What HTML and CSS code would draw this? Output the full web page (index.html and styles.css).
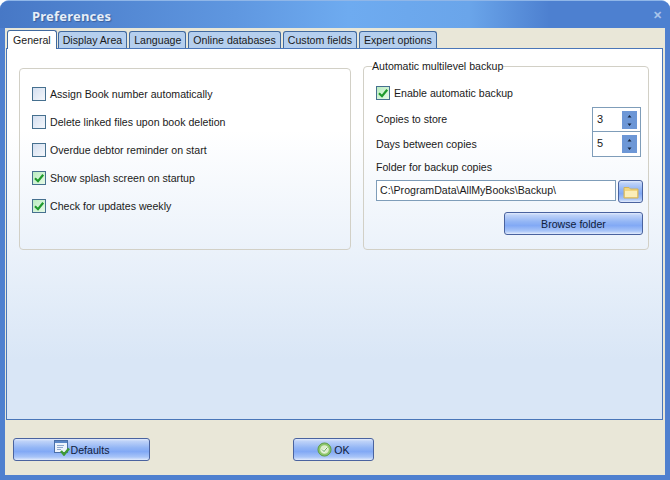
FILE: index.html
```html
<!DOCTYPE html>
<html lang="en">

<head>
    <meta charset="UTF-8">
    <title>Preferences</title>
    <link rel="stylesheet" href="styles.css">
</head>

<body>
    <div class="window">
        <div class="titlebar">
            <span class="title">Preferences</span>
            <span class="close">&#10005;</span>
        </div>

        <div class="client">
            <ul class="tabs">
                <li class="tab tab-active">General</li>
                <li class="tab">Display Area</li>
                <li class="tab">Language</li>
                <li class="tab">Online databases</li>
                <li class="tab">Custom fields</li>
                <li class="tab">Expert options</li>
            </ul>

            <div class="tab-panel">
                <div class="options-box">
                    <label class="check-row"><span class="checkbox"></span>Assign Book number automatically</label>
                    <label class="check-row"><span class="checkbox"></span>Delete linked files upon book deletion</label>
                    <label class="check-row"><span class="checkbox"></span>Overdue debtor reminder on start</label>
                    <label class="check-row">
                        <span class="checkbox checked">
                            <svg viewBox="0 0 12 12" class="tick"><path d="M2 6.2 L5 9.2 L10.2 2.8" /></svg>
                        </span>Show splash screen on startup
                    </label>
                    <label class="check-row">
                        <span class="checkbox checked">
                            <svg viewBox="0 0 12 12" class="tick"><path d="M2 6.2 L5 9.2 L10.2 2.8" /></svg>
                        </span>Check for updates weekly
                    </label>
                </div>

                <fieldset class="backup-box">
                    <legend>Automatic multilevel backup</legend>
                    <label class="enable-row">
                        <span class="checkbox checked">
                            <svg viewBox="0 0 12 12" class="tick"><path d="M2 6.2 L5 9.2 L10.2 2.8" /></svg>
                        </span>Enable automatic backup
                    </label>

                    <div class="spin-rows">
                        <span class="spin-label">Copies to store</span>
                        <div class="spinner">
                            <span class="spin-value">3</span>
                            <span class="spin-buttons">
                                <svg viewBox="0 0 15 18" class="spin-arrows"><path d="M7.5 4 L5.5 6.5 H9.5 Z M7.5 15 L5.5 12.5 H9.5 Z" /></svg>
                            </span>
                        </div>
                        <span class="spin-label">Days between copies</span>
                        <div class="spinner spinner-last">
                            <span class="spin-value">5</span>
                            <span class="spin-buttons">
                                <svg viewBox="0 0 15 18" class="spin-arrows"><path d="M7.5 4 L5.5 6.5 H9.5 Z M7.5 15 L5.5 12.5 H9.5 Z" /></svg>
                            </span>
                        </div>
                    </div>

                    <div class="folder-label">Folder for backup copies</div>
                    <div class="folder-row">
                        <div class="path-input">C:\ProgramData\AllMyBooks\Backup\</div>
                        <button class="btn folder-btn">
                            <svg viewBox="0 0 16 14" class="folder-icon">
                                <path d="M1 2.5 H6 L7.5 4 H15 V13 H1 Z" fill="#f1d680" stroke="#d3b45c" />
                                <path d="M2 6 H14 V12 H2 Z" fill="#fbeeb8" />
                            </svg>
                        </button>
                    </div>
                    <div class="browse-row">
                        <button class="btn browse-btn">Browse folder</button>
                    </div>
                </fieldset>
            </div>

            <div class="footer">
                <button class="btn defaults-btn">
                    <svg viewBox="0 0 16 16" class="btn-icon defaults-icon">
                        <rect x="0.5" y="0.5" width="13" height="12" fill="#eef3fb" stroke="#4b6fa8" />
                        <rect x="1" y="1" width="12" height="2" fill="#5b86c6" />
                        <path d="M3 5.5 H10 M3 7.5 H9 M3 9.5 H7" stroke="#8fa8cc" />
                        <path d="M7 11 L10 14.5 L15 8.5" fill="none" stroke="#3f9a35" stroke-width="2.4" />
                    </svg>
                    Defaults
                </button>
                <button class="btn ok-btn">
                    <svg viewBox="0 0 16 16" class="btn-icon ok-icon">
                        <circle cx="8" cy="8" r="7" fill="#8cc56a" stroke="#5d9a44" />
                        <circle cx="8" cy="8" r="4.6" fill="#dceccb" />
                        <path d="M5.4 8 L7.5 10.2 L11 5.8" fill="none" stroke="#fff" stroke-width="2" />
                        <path d="M5.4 8 L7.5 10.2 L11 5.8" fill="none" stroke="#4f9a3c" stroke-width="1" />
                    </svg>
                    OK
                </button>
            </div>
        </div>
    </div>
</body>

</html>
```

FILE: styles.css
```css
* {
    box-sizing: border-box;
}

body {
    margin: 0;
    padding: 0;
    background-color: #ffffff;
    font-family: "Liberation Sans", sans-serif;
    font-size: 10.6px;
    color: #1a1a1a;
}

.window {
    display: flex;
    flex-direction: column;
    width: 670px;
    height: 480px;
    border-radius: 9px 9px 0 0;
    border-top: 1px solid #8fb6e8;
    background-color: #4f80cf;
    overflow: hidden;
}

.titlebar {
    display: flex;
    justify-content: space-between;
    align-items: center;
    height: 27px;
    padding: 2px 8px 0 32px;
    background: linear-gradient(to right, #4778c6 0%, #5f97e0 35%, #6eabf0 52%, #6aa5ea 70%, #4d80d0 82%, #4d80d0 100%);
}

.title {
    font-family: "Noto Sans", sans-serif;
    font-size: 13px;
    font-weight: bold;
    letter-spacing: 0.2px;
    color: #e6eef8;
    text-shadow: 1px 1px 1px #3a5f9c;
}

.close {
    font-size: 11px;
    font-weight: bold;
    color: #a9c4ea;
}

.client {
    display: flex;
    flex-direction: column;
    flex: 1;
    margin: 0 5px 5px;
    background-color: #e9e7d8;
}

.tabs {
    display: flex;
    gap: 2px;
    height: 20px;
    margin: 0;
    padding: 3px 0 0 2px;
    list-style-type: none;
}

.tab {
    height: 17px;
    padding: 1px 4px 0;
    border: 1px solid #40699f;
    border-bottom: none;
    border-radius: 3px 3px 0 0;
    background-color: #b5cfee;
    line-height: 15px;
    white-space: nowrap;
}

.tab-active {
    position: relative;
    height: 19px;
    margin-top: -1px;
    margin-right: -1px;
    padding: 2px 5px 0;
    background-color: #ffffff;
    z-index: 1;
}

.tab-panel {
    display: grid;
    grid-template-columns: 332px 284px;
    gap: 12px;
    align-items: start;
    height: 372px;
    margin: 0 2px 0 1px;
    padding: 10px 0 0 12px;
    border: 1px solid #4a76b8;
    background: linear-gradient(to bottom, #ffffff 0%, #ffffff 22%, #d9e6f6 84%, #d9e6f6 100%);
}

.options-box {
    height: 182px;
    margin-top: 9px;
    padding: 11px 12px 0;
    border: 1px solid #d2d0c6;
    border-radius: 4px;
}

.check-row {
    display: flex;
    align-items: center;
    gap: 4px;
    height: 28px;
}

.checkbox {
    display: flex;
    flex: none;
    align-items: center;
    justify-content: center;
    width: 14px;
    height: 14px;
    border: 1px solid #46708f;
    background: linear-gradient(135deg, #d4dff0 0%, #f4f7fb 100%);
}

.checkbox.checked {
    background: linear-gradient(135deg, #b9ecc0 0%, #e6f9e6 100%);
}

.tick {
    width: 12px;
    height: 12px;
}

.tick path {
    fill: none;
    stroke: #1f9a2c;
    stroke-width: 2.2;
}

.backup-box {
    height: 191px;
    margin: 0;
    padding: 12px 5px 0 12px;
    border: 1px solid #d2d0c6;
    border-radius: 4px;
}

.backup-box legend {
    padding: 0;
    margin-left: -4px;
    line-height: 14px;
}

.enable-row {
    display: flex;
    align-items: center;
    gap: 4px;
    height: 16px;
}

.spin-rows {
    display: grid;
    grid-template-columns: 216px 49px;
    grid-template-rows: 24px 26px;
    margin-top: 6px;
}

.spin-label {
    align-self: center;
}

.spinner {
    display: flex;
    align-items: center;
    justify-content: space-between;
    height: 25px;
    padding: 0 3px 0 4px;
    border: 1px solid #7f9db9;
    background-color: #ffffff;
}

.spinner-last {
    height: 26px;
}

.spin-value {
    margin-top: -2px;
    font-size: 11px;
}

.spin-buttons {
    display: block;
    width: 15px;
    height: 18px;
    background-color: #6d97d6;
}

.spin-arrows {
    display: block;
    width: 15px;
    height: 18px;
    fill: #16263f;
}

.folder-label {
    margin-top: 3px;
    line-height: 15px;
}

.folder-row {
    display: flex;
    gap: 2px;
    margin-top: 5px;
}

.path-input {
    width: 240px;
    height: 21px;
    padding: 0 0 0 3px;
    border: 1px solid #7f9db9;
    background-color: #ffffff;
    line-height: 19px;
}

.btn {
    display: flex;
    align-items: center;
    justify-content: center;
    padding: 0;
    border: 1px solid #4a639f;
    border-radius: 3px;
    background: linear-gradient(to bottom, #e2ebfc 0%, #bfd3f8 10%, #92b5f5 42%, #82a9f5 60%, #a9c5f8 86%, #e2ebfc 100%);
    font-family: "Liberation Sans", sans-serif;
    font-size: 10.6px;
    color: #10203a;
}

.folder-btn {
    width: 25px;
    height: 23px;
}

.folder-icon {
    width: 16px;
    height: 14px;
}

.browse-row {
    display: flex;
    justify-content: flex-end;
    margin-top: 9px;
}

.browse-btn {
    width: 139px;
    height: 23px;
}

.footer {
    display: flex;
    flex: 1;
    padding: 18px 0 0 8px;
}

.defaults-btn {
    gap: 1px;
    width: 137px;
    height: 23px;
}

.ok-btn {
    gap: 2px;
    width: 81px;
    height: 23px;
    margin-left: 143px;
}

.btn-icon {
    width: 16px;
    height: 16px;
}

.defaults-icon {
    margin-top: -3px;
}

.ok-icon {
    width: 15px;
    height: 15px;
    margin-top: -1px;
}
```
